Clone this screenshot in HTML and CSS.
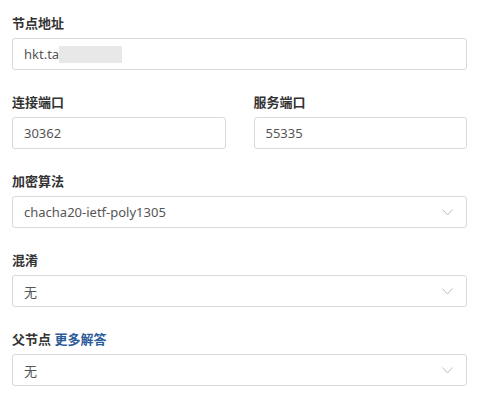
FILE: index.html
```html
<!DOCTYPE html>
<html lang="zh">
<head>
<meta charset="utf-8">
<link rel="stylesheet" href="styles.css">
</head>
<body>
<form class="form">
  <div class="group">
    <label class="label">节点地址</label>
    <div class="field"><span class="value">hkt.ta</span><span class="redact"></span></div>
  </div>
  <div class="row">
    <div class="group">
      <label class="label">连接端口</label>
      <div class="field"><span class="value">30362</span></div>
    </div>
    <div class="group">
      <label class="label">服务端口</label>
      <div class="field"><span class="value">55335</span></div>
    </div>
  </div>
  <div class="group">
    <label class="label">加密算法</label>
    <div class="field select"><span class="value">chacha20-ietf-poly1305</span>
      <svg class="chev" width="11" height="7" viewBox="0 0 11 7"><path d="M0.5 0.5 L5.5 6 L10.5 0.5" fill="none" stroke="#bdbdbd" stroke-width="1"/></svg>
    </div>
  </div>
  <div class="group">
    <label class="label">混淆</label>
    <div class="field select"><span class="value">无</span>
      <svg class="chev" width="11" height="7" viewBox="0 0 11 7"><path d="M0.5 0.5 L5.5 6 L10.5 0.5" fill="none" stroke="#bdbdbd" stroke-width="1"/></svg>
    </div>
  </div>
  <div class="group">
    <label class="label">父节点 <a class="link">更多解答</a></label>
    <div class="field select"><span class="value">无</span>
      <svg class="chev" width="11" height="7" viewBox="0 0 11 7"><path d="M0.5 0.5 L5.5 6 L10.5 0.5" fill="none" stroke="#bdbdbd" stroke-width="1"/></svg>
    </div>
  </div>
</form>
</body>
</html>
```
FILE: styles.css
```css
html, body {
  margin: 0;
  padding: 0;
  background: #fff;
}
body {
  font-family: "Noto Sans", "Noto Sans CJK SC", sans-serif;
  color: #333;
}
.form {
  padding: 13px 14px 0 12px;
  display: flex;
  flex-direction: column;
  gap: 22px;
}
.row {
  display: flex;
  gap: 28px;
}
.row .group {
  flex: 1;
}
.group {
  display: flex;
  flex-direction: column;
  gap: 5px;
}
.label {
  font-size: 13px;
  font-weight: bold;
  line-height: 20px;
  color: #333;
}
.link {
  color: #2d5b9a;
}
.field {
  height: 32px;
  box-sizing: border-box;
  border: 1px solid #d9d9d9;
  border-radius: 3px;
  padding: 0 13px 0 11px;
  display: flex;
  align-items: center;
  font-size: 13px;
  color: #555;
}
.select {
  justify-content: space-between;
}
.redact {
  display: inline-block;
  width: 63px;
  height: 17px;
  background: #e8e8e8;
}
.chev {
  display: block;
}
```
